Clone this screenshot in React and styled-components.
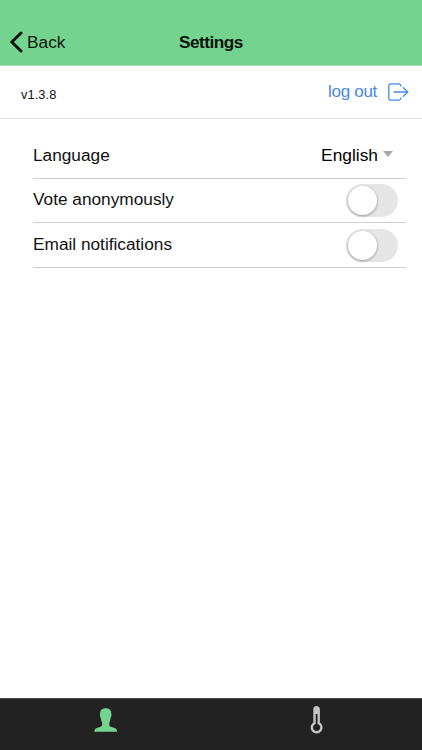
import styled, { createGlobalStyle } from "styled-components";
import { useState } from "react";

const GlobalStyle = createGlobalStyle`
  * {
    box-sizing: border-box;
  }
  body {
    margin: 0;
    background: #fff;
    font-family: "Liberation Sans", Arial, sans-serif;
  }
  button {
    padding: 0;
    border: none;
    background: none;
    font-family: inherit;
    cursor: pointer;
  }
`;

const Screen = styled.div`
  display: flex;
  flex-direction: column;
  height: 100vh;
  color: #111;
`;

const Header = styled.header`
  display: grid;
  grid-template-columns: 1fr auto 1fr;
  align-items: center;
  height: 66px;
  padding: 19px 10px 0;
  border-bottom: 1px solid #a5e0b6;
  background: #74d38f;
`;

const BackButton = styled.button`
  display: flex;
  align-items: center;
  gap: 4px;
  font-size: 17.3px;
  line-height: 22px;
  color: #0c170f;
  svg {
    display: block;
  }
`;

const Title = styled.h1`
  margin: 0;
  font-size: 17.2px;
  line-height: 22px;
  letter-spacing: -0.5px;
  color: #07120a;
`;

const InfoBar = styled.div`
  display: flex;
  justify-content: space-between;
  height: 53px;
  padding: 0 13px 0 21px;
  border-bottom: 1px solid #e3e3e3;
`;

const Version = styled.span`
  padding-top: 21px;
  font-size: 12.8px;
  line-height: 16px;
  letter-spacing: 0.1px;
`;

const LogoutButton = styled.button`
  display: flex;
  align-items: center;
  gap: 11px;
  height: 52px;
  font-size: 17px;
  letter-spacing: -0.3px;
  color: #4a88e2;
  svg {
    display: block;
  }
`;

const List = styled.main`
  flex: 1;
  padding: 15px 16px 0 33px;
`;

const Row = styled.div`
  display: flex;
  align-items: center;
  justify-content: space-between;
  height: ${(props) => props.$height || 44.7}px;
  padding-right: ${(props) => props.$inset || 8}px;
  border-bottom: 1px solid #cfcfcf;
  font-size: 17.25px;
  line-height: 20px;
`;

const Label = styled.span`
  padding-bottom: 2px;
`;

const Select = styled.button`
  display: flex;
  align-items: center;
  gap: 5px;
  padding-bottom: 2px;
  font-size: 17.35px;
  line-height: 20px;
  color: #000;
`;

const Caret = styled.span`
  margin-bottom: 2px;
  border: 5.5px solid transparent;
  border-top: 6px solid #a6a6a6;
  border-bottom: none;
`;

const Track = styled.button`
  display: flex;
  justify-content: ${(props) => (props.$on ? "flex-end" : "flex-start")};
  width: 52px;
  height: 33px;
  padding: 2px;
  border-radius: 17px;
  background: ${(props) => (props.$on ? "#74d38f" : "#e6e6e6")};
`;

const Thumb = styled.span`
  width: 29px;
  height: 29px;
  border-radius: 50%;
  background: #fff;
  box-shadow: 0 1px 3px rgba(0, 0, 0, 0.35);
`;

const TabBar = styled.nav`
  display: flex;
  height: 52px;
  border-top: 1px solid #4a4a4a;
  background: #222;
`;

const Tab = styled.button`
  display: flex;
  flex: 1;
  justify-content: center;
  padding-top: ${(props) => props.$top}px;
  color: ${(props) => (props.$active ? "#74d38f" : "#c4c4c4")};
  svg {
    display: block;
  }
`;

function Switch({ label }) {
  const [on, setOn] = useState(false);

  return (
    <Track
      role="switch"
      aria-checked={on}
      aria-label={label}
      $on={on}
      onClick={() => setOn((prev) => !prev)}
    >
      <Thumb />
    </Track>
  );
}

function BackIcon() {
  return (
    <svg width="13" height="22" viewBox="0 0 13 22" fill="none">
      <path
        d="M11 2 L1.8 11 L11 20"
        stroke="#07120a"
        strokeWidth="3"
        strokeLinecap="round"
        strokeLinejoin="round"
      />
    </svg>
  );
}

function LogoutIcon() {
  return (
    <svg width="21" height="18" viewBox="0 0 21 18" fill="none">
      <g
        stroke="currentColor"
        strokeWidth="1.3"
        strokeLinecap="round"
        strokeLinejoin="round"
      >
        <path d="M13 3 L12.3 1.7 Q11.8 .8 10.7 .8 H3 Q.8 .8 .8 3 V15 Q.8 17.2 3 17.2 H10.7 Q11.8 17.2 12.3 16.3 L13 15" />
        <path d="M6 9 H19.8 M15.3 4.8 L19.8 9 L15.3 13.2" />
      </g>
    </svg>
  );
}

function PersonIcon() {
  return (
    <svg width="24" height="24" viewBox="0 0 24 24" fill="currentColor">
      <path d="M11.7 .2 C8 .2 6 2.3 6.1 5.8 C5.7 6.2 6 9.4 6.8 10 C7.1 12 7.6 13.5 8.1 14.5 V17.3 C7.9 18.8 5.6 19.2 3.6 19.8 C1.6 20.4 .5 21.2 .3 23.7 H23.1 C22.9 21.2 21.8 20.4 19.8 19.8 C17.8 19.2 15.5 18.8 15.3 17.3 V14.5 C15.8 13.5 16.3 12 16.6 10 C17.4 9.4 17.7 6.2 17.3 5.8 C17.4 2.3 15.4 .2 11.7 .2 Z" />
    </svg>
  );
}

function ThermometerIcon() {
  return (
    <svg width="14" height="28" viewBox="0 0 14 28" fill="none">
      <path
        d="M4.5 17.2 V3.3 A2.1 2.1 0 0 1 8.7 3.3 V17.2 A4.8 4.8 0 1 1 4.5 17.2 Z"
        stroke="currentColor"
        strokeWidth="2.4"
      />
      <path d="M4.5 3 A2.1 2.1 0 0 1 8.7 3 V8 H4.5 Z" fill="currentColor" />
    </svg>
  );
}

function App() {
  return (
    <>
      <GlobalStyle />
      <Screen>
        {/* header */}
        <Header>
          <BackButton>
            <BackIcon />
            Back
          </BackButton>
          <Title>Settings</Title>
        </Header>
        <InfoBar>
          <Version>v1.3.8</Version>
          <LogoutButton>
            log out
            <LogoutIcon />
          </LogoutButton>
        </InfoBar>
        {/* settings */}
        <List>
          <Row $height={44.5} $inset={13}>
            <Label>Language</Label>
            <Select>
              English
              <Caret />
            </Select>
          </Row>
          <Row>
            <Label>Vote anonymously</Label>
            <Switch label="Vote anonymously" />
          </Row>
          <Row>
            <Label>Email notifications</Label>
            <Switch label="Email notifications" />
          </Row>
        </List>
        {/* tabs */}
        <TabBar>
          <Tab $active $top={9} aria-label="Profile">
            <PersonIcon />
          </Tab>
          <Tab $top={7} aria-label="Temperature">
            <ThermometerIcon />
          </Tab>
        </TabBar>
      </Screen>
    </>
  );
}

export default App;
